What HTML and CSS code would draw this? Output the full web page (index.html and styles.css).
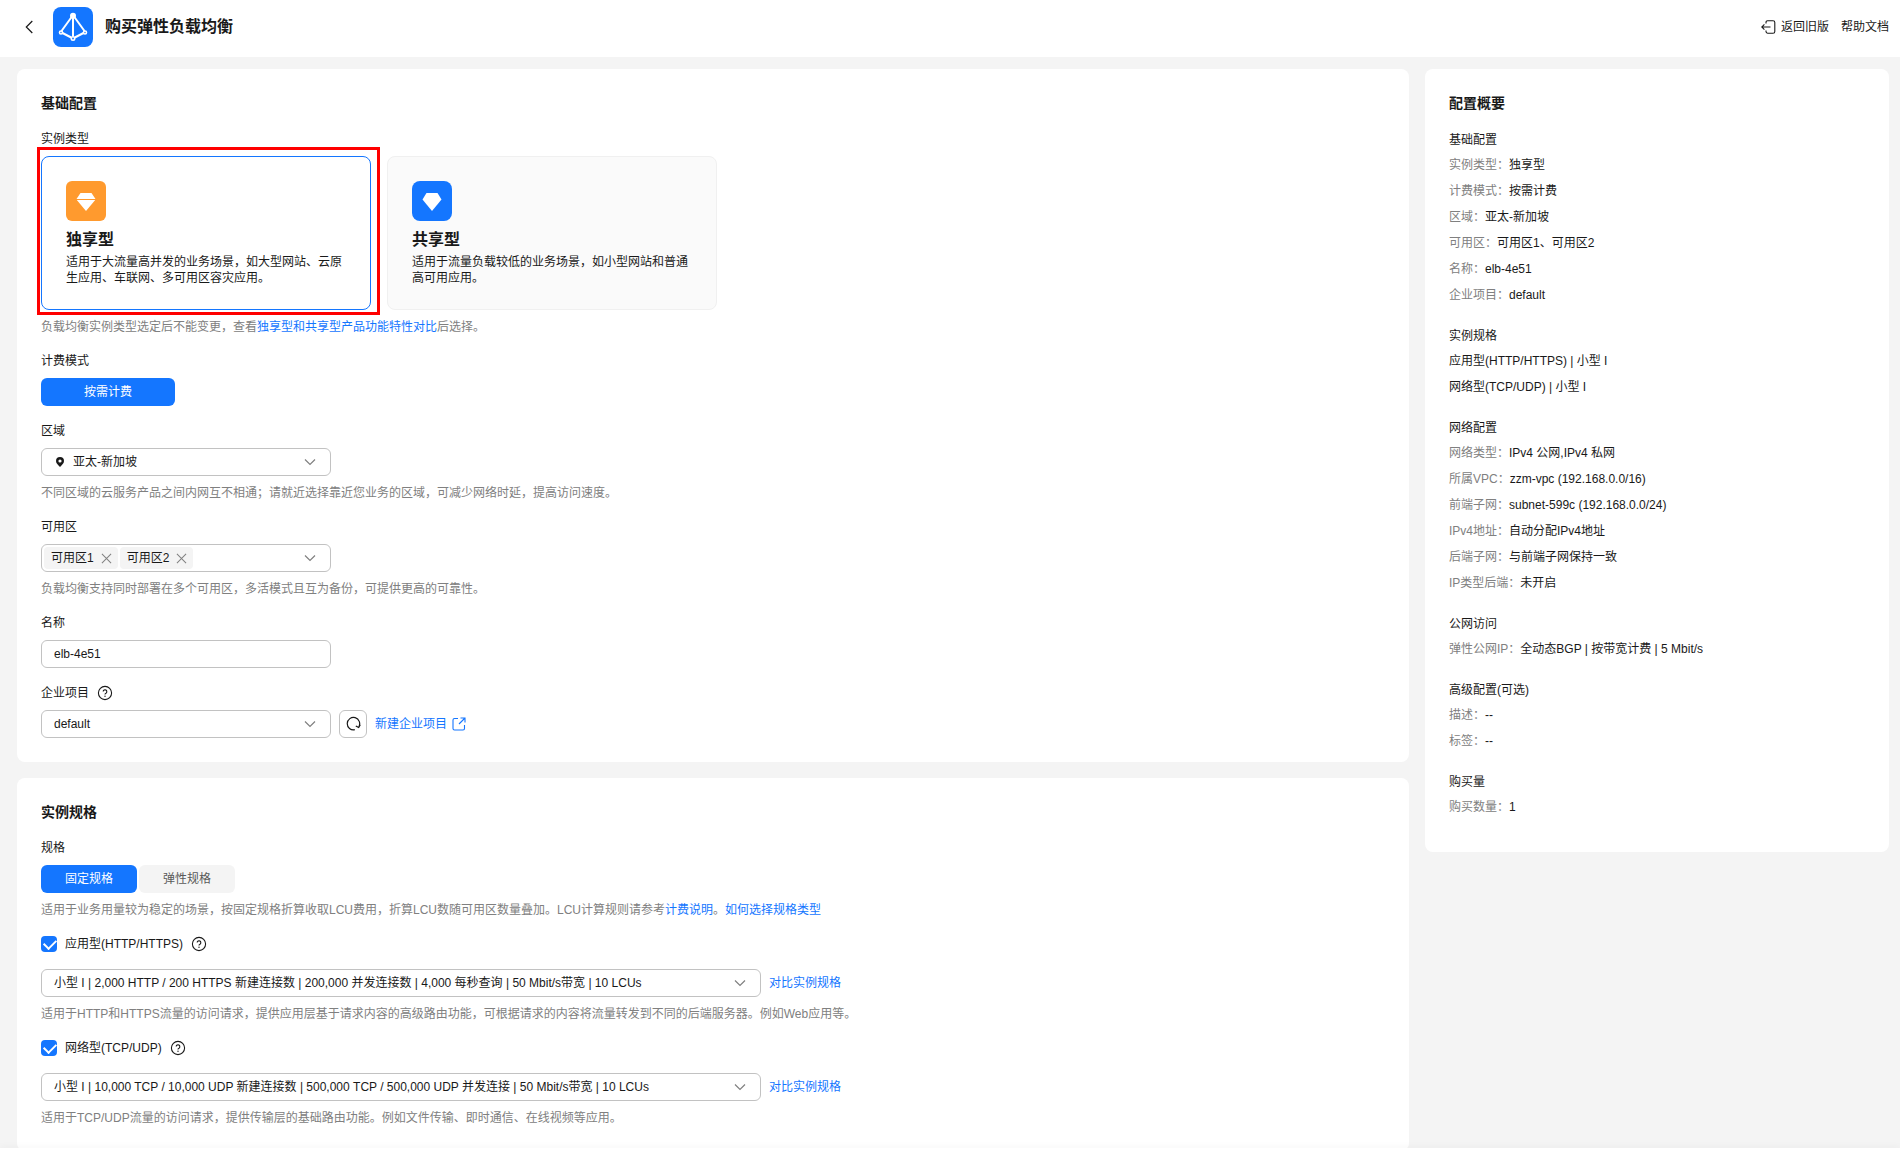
FILE: index.html
```html
<!DOCTYPE html>
<html lang="zh-CN">
  <head>
    <meta charset="UTF-8" />
    <meta name="viewport" content="width=device-width, initial-scale=1.0" />
    <title>购买弹性负载均衡</title>
    <link rel="stylesheet" href="styles.css">
  </head>
  <body>
    <!-- Iconos compartidos -->
    <svg class="sprite" aria-hidden="true">
      <symbol id="i-help" viewBox="0 0 16 16">
        <circle cx="8" cy="8" r="6.6" fill="none" stroke="currentColor" stroke-width="1.1" />
        <path d="M6.2 6.6a1.8 1.8 0 1 1 2.7 1.6c-.6.3-.9.6-.9 1.2" fill="none" stroke="currentColor" stroke-width="1.1" />
        <circle cx="8" cy="11.2" r=".7" fill="currentColor" />
      </symbol>
      <symbol id="i-close" viewBox="0 0 12 12">
        <path d="M1 1l10 10M11 1L1 11" fill="none" stroke="currentColor" stroke-width="1.1" />
      </symbol>
      <symbol id="i-down" viewBox="0 0 12 12">
        <path d="M1 3.5l5 5 5-5" fill="none" stroke="currentColor" stroke-width="1.2" />
      </symbol>
    </svg>

    <header class="topbar">
      <button class="back" aria-label="返回">
        <svg width="8" height="14" viewBox="0 0 8 14"><path d="M7.3 1L1.3 7l6 6" fill="none" stroke="currentColor" stroke-width="1.2" /></svg>
      </button>
      <svg class="logo" viewBox="0 0 40 40" aria-hidden="true">
        <rect width="40" height="40" rx="8" fill="#1476ff" />
        <g fill="none" stroke="#fff" stroke-width="2">
          <path d="M19 9.5L8.500 24M21 9.5L31.5 24M20 9v20.5M9.5 26l8.700 4.500M30.5 26l-8.700 4.500" />
          <circle cx="8" cy="25.5" r="1.5" stroke-width="1.6" />
          <circle cx="32" cy="25.5" r="1.5" stroke-width="1.6" />
          <circle cx="20" cy="31.5" r="1.7" stroke-width="1.6" />
        </g>
        <circle cx="20" cy="8.8" r="3" fill="#fff" />
      </svg>
      <h1>购买弹性负载均衡</h1>
      <nav class="topbar-links">
        <a href="#">
          <svg width="15" height="14" viewBox="0 0 15 14" aria-hidden="true"><path d="M5 3.500V2.400Q5 .800 6.600 .800H12Q13.800.800 13.800 2.600V11.400Q13.800 13.200 12 13.200H6.600Q5 13.200 5 11.600V10.500M9.500 7H.800M3.400 4.400L.800 7l2.600 2.600" fill="none" stroke="currentColor" stroke-width="1.1" /></svg>
          返回旧版
        </a>
        <a href="#">帮助文档</a>
      </nav>
    </header>

    <div class="content">
      <main>
        <section class="panel">
          <h2>基础配置</h2>

          <div class="field">
            <span class="label">实例类型</span>
            <div class="types">
              <button class="type selected">
                <svg viewBox="0 0 40 40" aria-hidden="true">
                  <rect width="40" height="40" rx="6" fill="#ff9a2e" />
                  <path d="M14.500 12h11l4 6H10.500zM10.800 19H29.200l-9.200 11z" fill="#fff" />
                </svg>
                <strong>独享型</strong>
                <span>适用于大流量高并发的业务场景，如大型网站、云原生应用、车联网、多可用区容灾应用。</span>
              </button>
              <button class="type">
                <svg viewBox="0 0 40 40" aria-hidden="true">
                  <rect width="40" height="40" rx="8" fill="#1476ff" />
                  <path d="M14.500 12h11l4 6.500-9.500 11.500-9.500-11.500z" fill="#fff" />
                </svg>
                <strong>共享型</strong>
                <span>适用于流量负载较低的业务场景，如小型网站和普通高可用应用。</span>
              </button>
              <div class="marker"></div>
            </div>
            <p class="hint">负载均衡实例类型选定后不能变更，查看<a href="#">独享型和共享型产品功能特性对比</a>后选择。</p>
          </div>

          <div class="field">
            <span class="label">计费模式</span>
            <div class="segment">
              <button class="on wide">按需计费</button>
            </div>
          </div>

          <div class="field">
            <label class="label" for="region">区域</label>
            <div class="select">
              <svg class="pin" width="8" height="10" viewBox="0 0 8 10" aria-hidden="true"><path d="M4 0a4 4 0 0 1 4 4c0 2.300-2 4-4 6C2 8 0 6.300 0 4a4 4 0 0 1 4-4zm0 2.400a1.600 1.600 0 1 0 0 3.200 1.600 1.600 0 0 0 0-3.200z" fill="currentColor" /></svg>
              <select id="region" class="with-pin"><option>亚太-新加坡</option></select>
              <svg class="arrow"><use href="#i-down" /></svg>
            </div>
            <p class="hint">不同区域的云服务产品之间内网互不相通；请就近选择靠近您业务的区域，可减少网络时延，提高访问速度。</p>
          </div>

          <div class="field">
            <span class="label">可用区</span>
            <div class="select tags">
              <span class="tag">可用区1<button aria-label="移除可用区1"><svg><use href="#i-close" /></svg></button></span>
              <span class="tag">可用区2<button aria-label="移除可用区2"><svg><use href="#i-close" /></svg></button></span>
              <svg class="arrow"><use href="#i-down" /></svg>
            </div>
            <p class="hint">负载均衡支持同时部署在多个可用区，多活模式且互为备份，可提供更高的可靠性。</p>
          </div>

          <div class="field">
            <label class="label" for="name">名称</label>
            <input type="text" class="text" id="name" value="elb-4e51" />
          </div>

          <div class="field">
            <label class="label" for="project">企业项目 <svg class="help"><use href="#i-help" /></svg></label>
            <div class="row">
              <div class="select">
                <select id="project"><option>default</option></select>
                <svg class="arrow"><use href="#i-down" /></svg>
              </div>
              <button class="refresh" aria-label="刷新">
                <svg width="16" height="16" viewBox="0 0 16 16"><path d="M9.800 13.700A6.200 6.200 0 1 1 13.800 10.800M10.800 10l2.900 1.500 1.600-2.700" fill="none" stroke="currentColor" stroke-width="1.200" /></svg>
              </button>
              <a href="#" class="external">新建企业项目
                <svg width="14" height="14" viewBox="0 0 14 14" aria-hidden="true"><path d="M6 1.500H2.500Q1 1.500 1 3v8.500Q1 13 2.500 13H11q1.500 0 1.500-1.500V8M8.500 1H13v4.500M13 1L7 7" fill="none" stroke="currentColor" stroke-width="1.100" /></svg>
              </a>
            </div>
          </div>
        </section>

        <section class="panel">
          <h2>实例规格</h2>

          <div class="field">
            <span class="label">规格</span>
            <div class="segment">
              <button class="on">固定规格</button>
              <button>弹性规格</button>
            </div>
            <p class="hint">适用于业务用量较为稳定的场景，按固定规格折算收取LCU费用，折算LCU数随可用区数量叠加。LCU计算规则请参考<a href="#">计费说明</a>。<a href="#">如何选择规格类型</a></p>
          </div>

          <div class="field">
            <label class="check"><input type="checkbox" checked />应用型(HTTP/HTTPS) <svg class="help"><use href="#i-help" /></svg></label>
            <div class="row">
              <div class="select long">
                <select aria-label="应用型规格"><option>小型 I | 2,000 HTTP / 200 HTTPS 新建连接数 | 200,000 并发连接数 | 4,000 每秒查询 | 50 Mbit/s带宽 | 10 LCUs</option></select>
                <svg class="arrow"><use href="#i-down" /></svg>
              </div>
              <a href="#">对比实例规格</a>
            </div>
            <p class="hint">适用于HTTP和HTTPS流量的访问请求，提供应用层基于请求内容的高级路由功能，可根据请求的内容将流量转发到不同的后端服务器。例如Web应用等。</p>
          </div>

          <div class="field">
            <label class="check"><input type="checkbox" checked />网络型(TCP/UDP) <svg class="help"><use href="#i-help" /></svg></label>
            <div class="row">
              <div class="select long">
                <select aria-label="网络型规格"><option>小型 I | 10,000 TCP / 10,000 UDP 新建连接数 | 500,000 TCP / 500,000 UDP 并发连接 | 50 Mbit/s带宽 | 10 LCUs</option></select>
                <svg class="arrow"><use href="#i-down" /></svg>
              </div>
              <a href="#">对比实例规格</a>
            </div>
            <p class="hint">适用于TCP/UDP流量的访问请求，提供传输层的基础路由功能。例如文件传输、即时通信、在线视频等应用。</p>
          </div>
        </section>
      </main>

      <aside class="panel summary">
        <h2>配置概要</h2>
        <h3>基础配置</h3>
        <dl>
          <div><dt>实例类型：</dt><dd>独享型</dd></div>
          <div><dt>计费模式：</dt><dd>按需计费</dd></div>
          <div><dt>区域：</dt><dd>亚太-新加坡</dd></div>
          <div><dt>可用区：</dt><dd>可用区1、可用区2</dd></div>
          <div><dt>名称：</dt><dd>elb-4e51</dd></div>
          <div><dt>企业项目：</dt><dd>default</dd></div>
        </dl>
        <h3>实例规格</h3>
        <ul>
          <li>应用型(HTTP/HTTPS) | 小型 I</li>
          <li>网络型(TCP/UDP) | 小型 I</li>
        </ul>
        <h3>网络配置</h3>
        <dl>
          <div><dt>网络类型：</dt><dd>IPv4 公网,IPv4 私网</dd></div>
          <div><dt>所属VPC：</dt><dd>zzm-vpc (192.168.0.0/16)</dd></div>
          <div><dt>前端子网：</dt><dd>subnet-599c (192.168.0.0/24)</dd></div>
          <div><dt>IPv4地址：</dt><dd>自动分配IPv4地址</dd></div>
          <div><dt>后端子网：</dt><dd>与前端子网保持一致</dd></div>
          <div><dt>IP类型后端：</dt><dd>未开启</dd></div>
        </dl>
        <h3>公网访问</h3>
        <dl>
          <div><dt>弹性公网IP：</dt><dd>全动态BGP | 按带宽计费 | 5 Mbit/s</dd></div>
        </dl>
        <h3>高级配置(可选)</h3>
        <dl>
          <div><dt>描述：</dt><dd>--</dd></div>
          <div><dt>标签：</dt><dd>--</dd></div>
        </dl>
        <h3>购买量</h3>
        <dl>
          <div><dt>购买数量：</dt><dd>1</dd></div>
        </dl>
      </aside>
    </div>
    <footer class="bottombar"></footer>
  </body>
</html>
```
FILE: styles.css
```css
* {
  box-sizing: border-box;
}

html,
body {
  margin: 0;
  height: 100%;
}

body {
  display: flex;
  flex-direction: column;
  overflow: hidden;
  background: #f4f4f4;
  color: #191919;
  font-family: "Liberation Sans", "Noto Sans CJK SC", sans-serif;
  font-size: 12px;
  line-height: 18px;
}

button,
input,
select {
  margin: 0;
  font: inherit;
  color: inherit;
}

button {
  padding: 0;
  border: none;
  background: none;
  cursor: pointer;
}

a {
  color: #1476ff;
  text-decoration: none;
}

h1,
h2,
h3,
p,
dl,
dd,
ul {
  margin: 0;
  padding: 0;
}

svg {
  display: block;
  flex: none;
}

.sprite {
  position: absolute;
  width: 0;
  height: 0;
}

/* Cabecera */
.topbar {
  display: flex;
  flex: none;
  align-items: center;
  height: 57px;
  padding: 0 11px 3px 25px;
  background: #fff;
}

.back {
  display: flex;
}

.logo {
  width: 40px;
  height: 40px;
  margin: 0 12px 0 20px;
}

h1 {
  font-size: 16px;
  line-height: 24px;
  font-weight: 700;
}

.topbar-links {
  display: flex;
  gap: 12px;
  margin-left: auto;
}

.topbar-links a {
  display: flex;
  align-items: center;
  gap: 5px;
  color: #191919;
}

/* Contenido */
.content {
  display: grid;
  flex: 1;
  grid-template-columns: 3fr 1fr;
  gap: 16px;
  align-items: start;
  min-height: 0;
  padding: 12px 11px 0 17px;
  overflow: auto;
  scrollbar-width: none;
}

main {
  display: grid;
  gap: 16px;
  min-width: 0;
}

.panel {
  padding: 24px;
  border-radius: 8px;
  background: #fff;
}

h2 {
  margin-bottom: 16px;
  font-size: 14px;
  line-height: 21px;
  font-weight: 700;
}

.field + .field {
  margin-top: 16px;
}

.label {
  display: flex;
  align-items: center;
  gap: 8px;
  margin-bottom: 8px;
}

.hint {
  margin-top: 8px;
  color: #808080;
}

.help {
  width: 16px;
  height: 16px;
}

.row {
  display: flex;
  align-items: center;
  gap: 8px;
}

/* Tipos de instancia */
.types {
  display: flex;
  position: relative;
  gap: 16px;
}

.type {
  display: flex;
  flex-direction: column;
  align-items: flex-start;
  width: 330px;
  height: 154px;
  padding: 24px;
  border: 1px solid #f0f0f0;
  border-radius: 8px;
  background: #fafafa;
  text-align: left;
  line-height: 16px;
}

.type.selected {
  border-color: #1476ff;
  background: #fff;
}

.type svg {
  width: 40px;
  height: 40px;
}

.type strong {
  margin: 8px 0 3px;
  font-size: 16px;
  line-height: 22px;
  font-weight: 700;
}

/* Recuadro rojo sobre el tipo elegido */
.marker {
  position: absolute;
  top: -9px;
  left: -4px;
  width: 343px;
  height: 168px;
  border: 3px solid #f00;
  pointer-events: none;
}

/* Controles */
.segment {
  display: flex;
  gap: 2px;
}

.segment button {
  width: 96px;
  height: 28px;
  border-radius: 6px;
  background: #f4f4f4;
  color: #595959;
}

.segment .on {
  background: #1476ff;
  color: #fff;
}

.segment .wide {
  width: 134px;
}

.select,
.text {
  width: 290px;
  height: 28px;
  border: 1px solid #c2c2c2;
  border-radius: 6px;
  background: #fff;
}

.text {
  display: block;
  padding: 0 12px;
}

.select {
  display: flex;
  position: relative;
  align-items: center;
}

.long {
  width: 720px;
}

.select select {
  width: 100%;
  height: 100%;
  padding: 0 36px 0 12px;
  border: none;
  border-radius: 6px;
  background: none;
  appearance: none;
}

.select .with-pin {
  padding-left: 31px;
}

.pin {
  position: absolute;
  left: 14px;
}

.arrow {
  position: absolute;
  right: 14px;
  width: 12px;
  height: 12px;
  color: #808080;
  pointer-events: none;
}

.tags {
  gap: 2px;
  padding: 0 2px;
}

.tag {
  display: flex;
  align-items: center;
  gap: 7px;
  height: 22px;
  padding: 0 6px 0 7px;
  border-radius: 4px;
  background: #f4f4f4;
}

.tag svg {
  width: 11px;
  height: 11px;
  color: #808080;
}

.refresh {
  display: flex;
  align-items: center;
  justify-content: center;
  width: 28px;
  height: 28px;
  border: 1px solid #c2c2c2;
  border-radius: 6px;
}

.external {
  display: flex;
  align-items: center;
  gap: 5px;
}

.check {
  display: flex;
  align-items: center;
  gap: 8px;
  width: fit-content;
  margin-bottom: 16px;
}

.check input {
  width: 16px;
  height: 16px;
  border-radius: 4px;
  background: #1476ff;
  appearance: none;
}

.check input:checked::before {
  content: "";
  display: block;
  width: 10px;
  height: 6px;
  margin: 3px 0 0 3px;
  border-left: 2px solid #fff;
  border-bottom: 2px solid #fff;
  transform: rotate(-45deg);
}

/* Resumen */
.summary {
  padding-bottom: 12px;
}

.summary h2 {
  margin-bottom: 18px;
}

h3 {
  margin-bottom: 8px;
  font-size: 12px;
  line-height: 16px;
  font-weight: 400;
}

.summary dl,
.summary ul {
  padding-bottom: 16px;
  list-style: none;
}

.summary dl div,
.summary li {
  display: flex;
  padding-bottom: 8px;
}

dt {
  color: #808080;
}

.bottombar {
  position: relative;
  flex: none;
  height: 1px;
  background: #fff;
  box-shadow: 0 0 6px rgba(0, 0, 0, 0.15);
}
```
